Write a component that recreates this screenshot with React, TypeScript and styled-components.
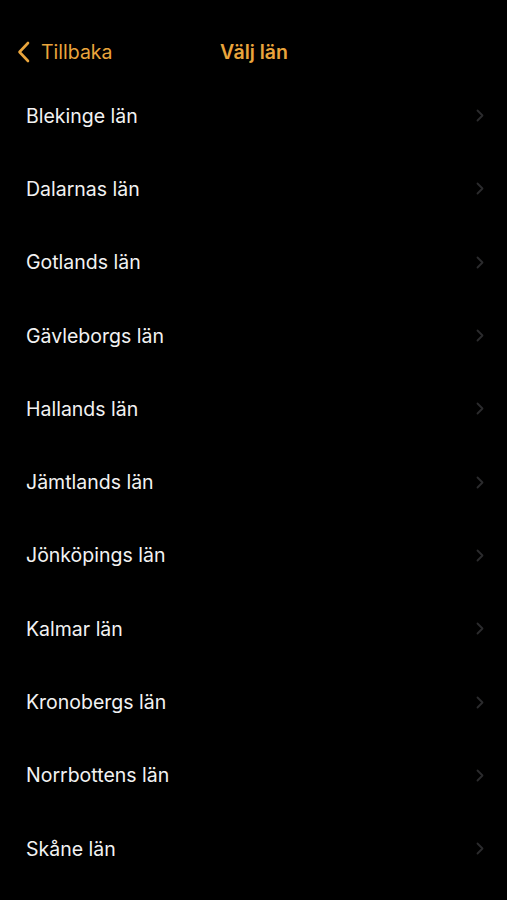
import styled, { createGlobalStyle } from 'styled-components';

const GlobalStyle = createGlobalStyle`
  html, body {
    margin: 0;
    padding: 0;
    background: #000;
  }
  body {
    font-family: Inter, "Liberation Sans", sans-serif;
    -webkit-font-smoothing: antialiased;
  }
`;

const Screen = styled.div`
  width: 507px;
  height: 900px;
  background: #000;
  overflow: hidden;
  display: flex;
  flex-direction: column;
`;

const NavBar = styled.div`
  flex-shrink: 0;
  height: 79px;
  box-sizing: border-box;
  padding: 25px 16px 0 17px;
  display: grid;
  grid-template-columns: 1fr auto 1fr;
  align-items: center;
`;

const BackButton = styled.button`
  display: flex;
  align-items: center;
  gap: 11px;
  background: none;
  border: 0;
  padding: 0;
  color: #eaa53c;
  font-family: inherit;
  font-size: 19.5px;
  justify-self: start;
  cursor: pointer;
`;

const Title = styled.h1`
  margin: 0;
  color: #eaa53c;
  font-size: 19.5px;
  font-weight: 600;
`;

const List = styled.ul`
  list-style: none;
  margin: 0;
  padding: 0;
`;

const Row = styled.li`
  height: 73.3px;
  display: flex;
  align-items: center;
  justify-content: space-between;
  padding: 0 23px 0 26px;
`;

const Label = styled.span`
  color: #f2f2f2;
  font-size: 19.5px;
  font-weight: 400;
`;

const counties = [
  'Blekinge län',
  'Dalarnas län',
  'Gotlands län',
  'Gävleborgs län',
  'Hallands län',
  'Jämtlands län',
  'Jönköpings län',
  'Kalmar län',
  'Kronobergs län',
  'Norrbottens län',
  'Skåne län',
];

function BackChevron() {
  return (
    <svg width="13" height="22" viewBox="0 0 13 22" fill="none">
      <path d="M11 2 L2.5 11 L11 20" stroke="#eaa53c" strokeWidth="2.6" strokeLinecap="round" strokeLinejoin="round" />
    </svg>
  );
}

function RowChevron() {
  return (
    <svg width="8" height="13" viewBox="0 0 8 13" fill="none">
      <path d="M1.5 1.5 L6.5 6.5 L1.5 11.5" stroke="#2b2b2d" strokeWidth="1.8" strokeLinecap="round" strokeLinejoin="round" />
    </svg>
  );
}

export default function App() {
  return (
    <>
      <GlobalStyle />
      <Screen>
        <NavBar>
          <BackButton>
            <BackChevron />
            Tillbaka
          </BackButton>
          <Title>Välj län</Title>
          <div />
        </NavBar>
        <List>
          {counties.map((name) => (
            <Row key={name}>
              <Label>{name}</Label>
              <RowChevron />
            </Row>
          ))}
        </List>
      </Screen>
    </>
  );
}
